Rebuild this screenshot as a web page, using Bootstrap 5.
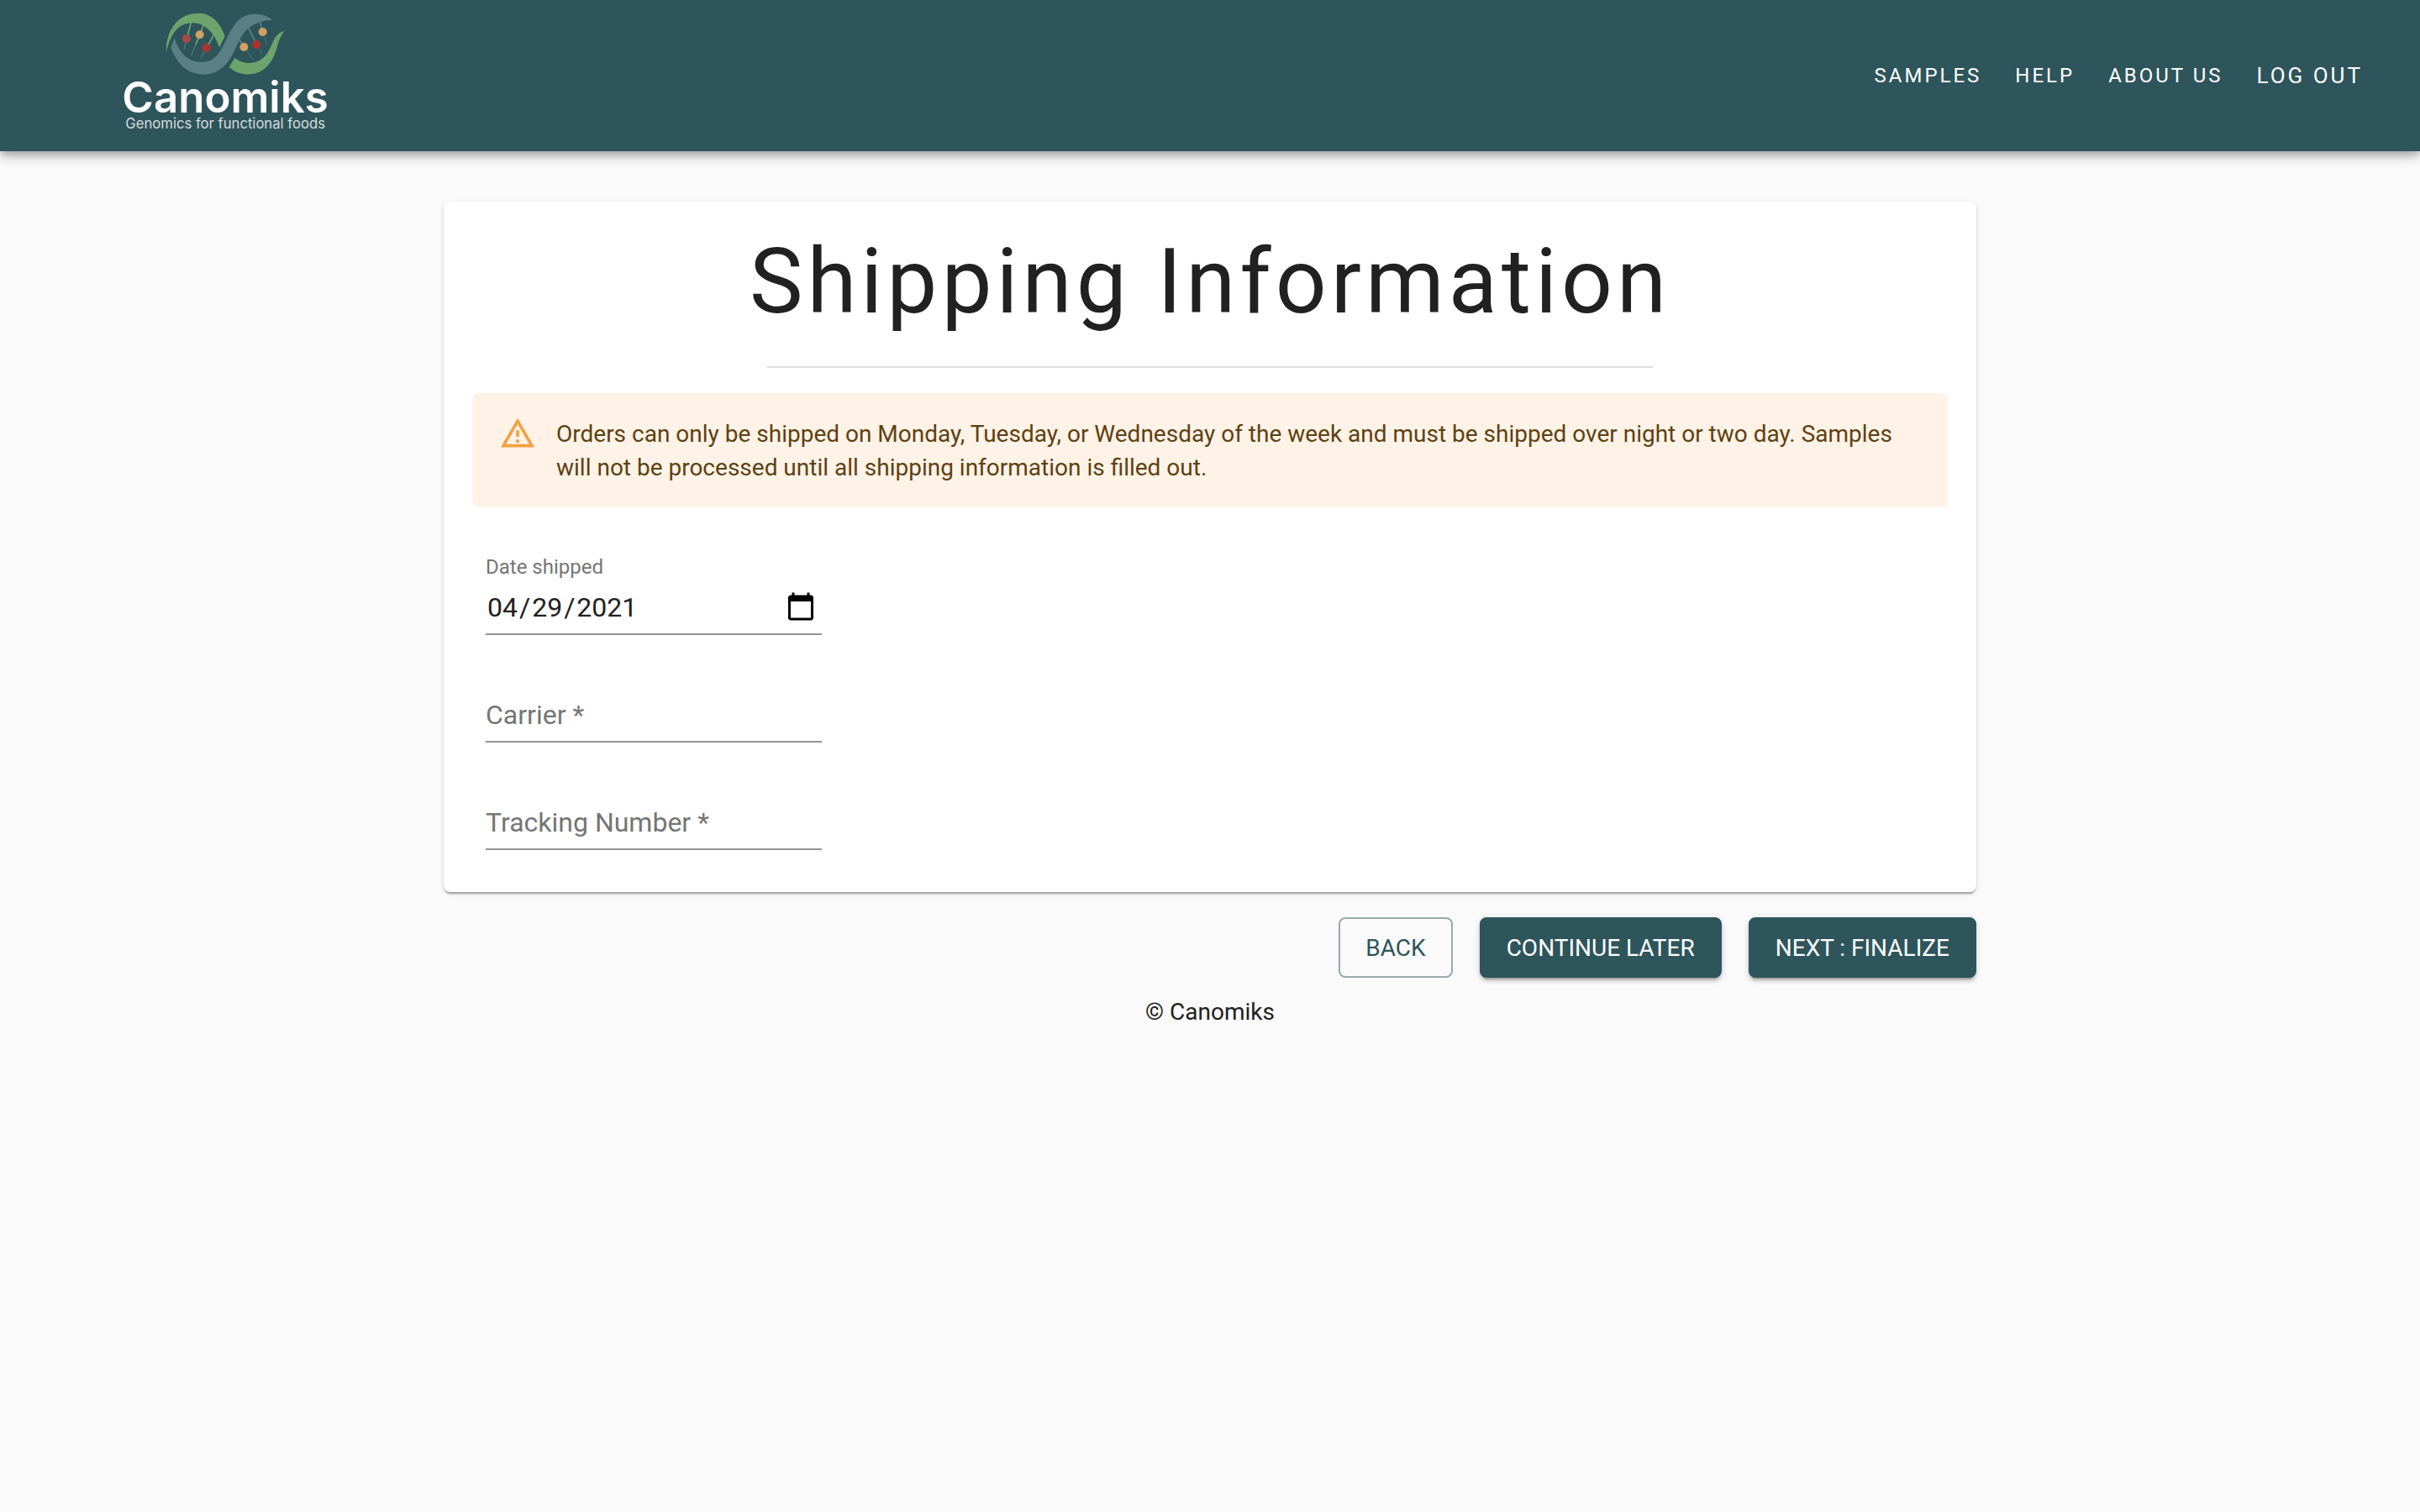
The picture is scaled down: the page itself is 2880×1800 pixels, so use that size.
<!DOCTYPE html>
<html lang="en">
<head>
<meta charset="utf-8">
<meta name="viewport" content="width=device-width, initial-scale=1">
<title>Canomiks - Shipping Information</title>
<link href="https://cdn.jsdelivr.net/npm/bootstrap@5.3.0/dist/css/bootstrap.min.css" rel="stylesheet">
<style>
  :root { --brand: #2e555b; --ink: #212121; --muted: #757575; --rule: #949494; }
  body { background: #fafafa; color: var(--ink); font-family: Roboto, "Liberation Sans", sans-serif; font-size: 28px; line-height: 40px; }
  .site-bar { background: var(--brand); min-height: 180px; padding: 0 48px 0 130px; box-shadow: 0 4px 8px -2px rgba(0,0,0,.2), 0 8px 10px 0 rgba(0,0,0,.14), 0 2px 20px 0 rgba(0,0,0,.12); }
  .brand-logo { width: 280px; height: 180px; }
  .site-bar .nav-link { color: #fff; font-size: 24px; line-height: 48px; letter-spacing: 3px; padding: 12px 20px; text-transform: uppercase; }
  .site-bar .nav-action { font-size: 26px; }
  .page-wrap { max-width: 1920px; padding: 60px 48px 0; }
  .sheet { border: 0; border-radius: 8px; padding: 32px 34px 50px; box-shadow: 0 4px 2px -2px rgba(0,0,0,.2), 0 2px 2px 0 rgba(0,0,0,.14), 0 2px 6px 0 rgba(0,0,0,.12); }
  .sheet-title { font-size: 107px; line-height: 128px; letter-spacing: 5px; font-weight: 400; margin: 0; }
  .sheet > .title-rule { width: 60%; height: 2px; margin: 36px auto 30px; border: 0; background: #e0e0e0; opacity: 1; }
  .notice { background: #fef3e6; color: #5f4012; border: 0; border-radius: 8px; padding: 26px 32px; gap: 24px; margin: 0 0 56px; }
  .notice svg { width: 44px; height: 44px; fill: #f2a144; }
  .notice-text { padding: 3px 0 1px; }
  .field-list { gap: 32px; padding: 0 16px; }
  .field { display: grid; width: 400px; max-width: 100%; grid-template-rows: 32px 64px; }
  .field label { color: var(--muted); pointer-events: none; z-index: 1; }
  .label-above { font-size: 24px; line-height: 24px; padding-top: 3px; }
  .label-inside { grid-area: 2 / 1; font-size: 32px; line-height: 38px; padding-top: 12px; }
  .field .form-control { grid-area: 2 / 1; background: transparent; border: 0; border-bottom: 2px solid var(--rule); border-radius: 0; color: var(--ink); font-size: 32px; line-height: 38px; height: 64px; padding: 12px 0; }
  .field ::-webkit-datetime-edit-month-field,
  .field ::-webkit-datetime-edit-day-field,
  .field ::-webkit-datetime-edit-year-field { padding: 0 2px; }
  .field ::-webkit-calendar-picker-indicator { width: 38px; height: 38px; padding: 0 6px; box-sizing: content-box; background-size: contain; }
  .action-row { gap: 32px; margin-top: 30px; }
  .action-row .btn { font-size: 28px; line-height: 48px; padding: 11px 30px 9px; border-width: 2px; border-radius: 8px; text-transform: uppercase; --bs-btn-bg: var(--brand); --bs-btn-border-color: var(--brand); --bs-btn-color: #fff; --bs-btn-hover-bg: #203b40; --bs-btn-hover-color: #fff; }
  .action-row .btn-solid { box-shadow: 0 6px 2px -4px rgba(0,0,0,.2), 0 4px 4px 0 rgba(0,0,0,.14), 0 2px 10px 0 rgba(0,0,0,.12); }
  .action-row .btn-line { --bs-btn-bg: transparent; --bs-btn-color: var(--brand); --bs-btn-border-color: #96aaad; }
  .site-foot { margin-top: 21px; }
</style>
<script src="https://cdn.jsdelivr.net/npm/bootstrap@5.3.0/dist/js/bootstrap.bundle.min.js"></script>
</head>
<body>
<header class="site-bar d-flex align-items-center justify-content-between">
  <a href="#" aria-label="Canomiks home" class="d-block">
    <svg class="brand-logo d-block" viewBox="0 0 840 540">
      <g stroke-width="5" stroke-linecap="round" fill="none">
        <g stroke="#6da36c"><path d="M292 80L267 176M339 84L293 198M378 118L328 206" stroke-width="2"/><path d="M292 80L279 130M339 84L310 157M376 118L350 168"/></g>
        <g stroke="#5b7f86"><path d="M538 78L563 160M494 94L546 194M464 142L514 214" stroke-width="2"/><path d="M538 78L548 112M494 94L524 154M464 142L482 168"/></g>
      </g>
      <path fill="#6da36c" d="M204 187C201 108 245 47 320 47C368 47 398 87 413 128L393 170C376 119 343 82 297 82C243 82 217 127 204 187Z"/>
      <path fill="#6da36c" d="M448 207L428 239C448 259 478 267 504 265C557 260 583 221 597 176C604 151 610 127 627 110C606 114 593 130 584 151C568 188 551 225 498 225C478 225 461 217 448 207Z"/>
      <path fill="#5b7f86" d="M233 136L220 169C237 220 274 266 337 266C390 266 423 231 446 184C466 141 482 77 582 71C567 57 546 50 520 50C467 50 444 87 423 130C401 177 383 223 327 222C277 221 247 183 233 136Z"/>
      <g fill="#a94a46"><circle cx="276" cy="138" r="15"/></g>
      <g fill="#d2a060"><circle cx="323" cy="124" r="15"/><circle cx="481" cy="168" r="15"/><circle cx="548" cy="114" r="15"/></g>
      <g fill="#ad3330"><circle cx="347" cy="171" r="15"/><circle cx="526" cy="160" r="15"/></g>
      <text x="46" y="401" font-family="Inter, sans-serif" font-weight="600" font-size="153" fill="#fff">Canomiks</text>
      <text x="58" y="459" font-family="Inter, sans-serif" font-size="50" fill="#d5dddf">Genomics for functional foods</text>
    </svg>
  </a>
  <nav class="nav" aria-label="Main">
    <a class="nav-link" href="#">Samples</a>
    <a class="nav-link" href="#">Help</a>
    <a class="nav-link" href="#">About us</a>
    <a class="nav-link nav-action" href="#">Log out</a>
  </nav>
</header>

<main class="page-wrap mx-auto">
  <form>
    <section class="card sheet">
      <h1 class="sheet-title text-center">Shipping Information</h1>
      <hr class="title-rule">
      <div class="alert notice d-flex align-items-start" role="alert">
        <svg class="flex-shrink-0" viewBox="0 0 24 24" aria-hidden="true"><path d="M12 5.99L19.53 19H4.47L12 5.99M12 2L1 21h22L12 2zm1 14h-2v2h2v-2zm0-6h-2v4h2v-4z"/></svg>
        <div class="notice-text">Orders can only be shipped on Monday, Tuesday, or Wednesday of the week and must be shipped over night or two day. Samples will not be processed until all shipping information is filled out.</div>
      </div>
      <div class="field-list d-flex flex-column">
        <div class="field">
          <label class="label-above" for="shipDate">Date shipped</label>
          <input class="form-control" type="date" id="shipDate" value="2021-04-29">
        </div>
        <div class="field">
          <label class="label-inside" for="carrier">Carrier *</label>
          <input class="form-control" type="text" id="carrier" required>
        </div>
        <div class="field">
          <label class="label-inside" for="tracking">Tracking Number *</label>
          <input class="form-control" type="text" id="tracking" required>
        </div>
      </div>
    </section>
    <div class="action-row d-flex flex-wrap justify-content-end">
      <button type="button" class="btn btn-line">Back</button>
      <button type="button" class="btn btn-solid">Continue later</button>
      <button type="submit" class="btn btn-solid">Next : Finalize</button>
    </div>
  </form>
</main>
<footer class="site-foot text-center">© Canomiks</footer>
</body>
</html>
